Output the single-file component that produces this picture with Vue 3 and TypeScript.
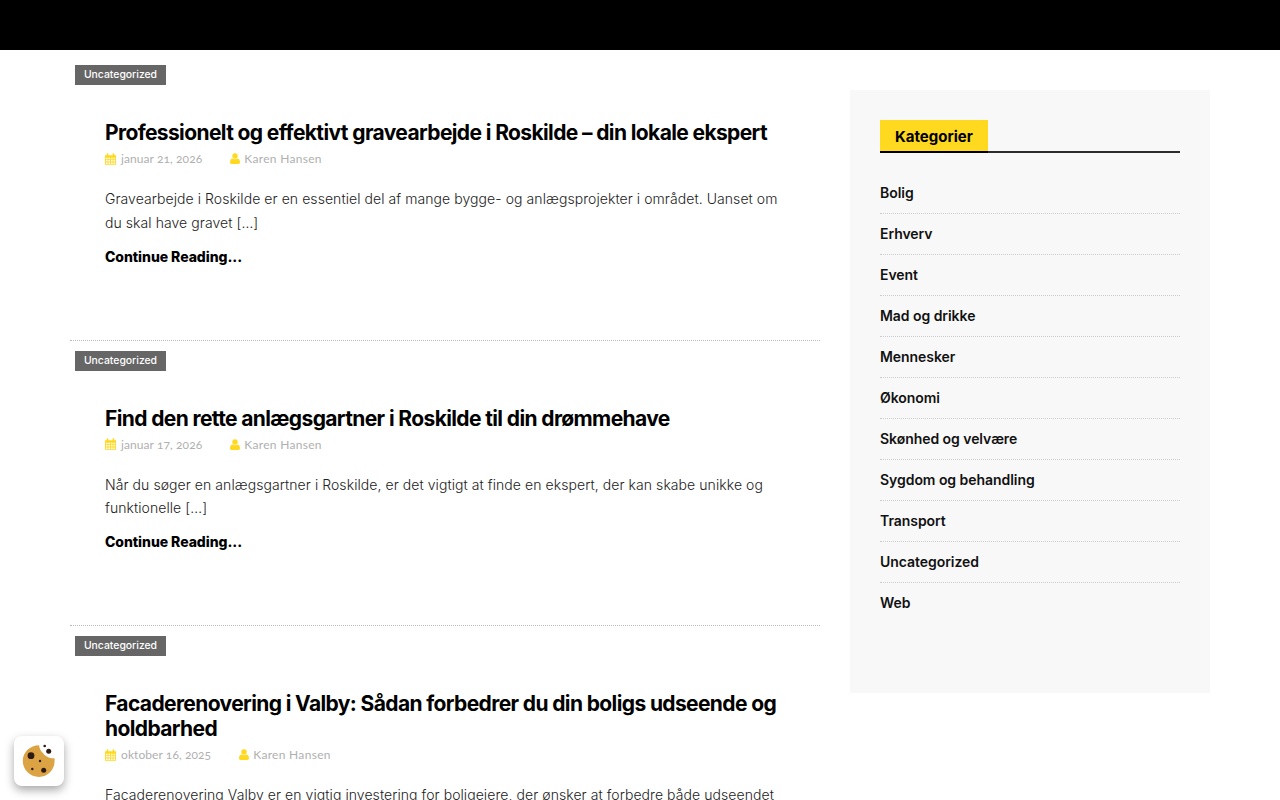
<script setup lang="ts">
interface Post {
  title: string[];
  date: string;
  text: string[];
  link: boolean;
}

const posts: Post[] = [
  {
    title: ['Professionelt og effektivt gravearbejde i Roskilde – din lokale ekspert'],
    date: 'januar 21, 2026',
    text: ['Gravearbejde i Roskilde er en essentiel del af mange bygge- og anlægsprojekter i området. Uanset om', 'du skal have gravet […]'],
    link: true,
  },
  {
    title: ['Find den rette anlægsgartner i Roskilde til din drømmehave'],
    date: 'januar 17, 2026',
    text: ['Når du søger en anlægsgartner i Roskilde, er det vigtigt at finde en ekspert, der kan skabe unikke og', 'funktionelle […]'],
    link: true,
  },
  {
    title: ['Facaderenovering i Valby: Sådan forbedrer du din boligs udseende og', 'holdbarhed'],
    date: 'oktober 16, 2025',
    text: ['Facaderenovering Valby er en vigtig investering for boligejere, der ønsker at forbedre både udseendet'],
    link: false,
  },
];

const categories: string[] = [
  'Bolig', 'Erhverv', 'Event', 'Mad og drikke', 'Mennesker', 'Økonomi',
  'Skønhed og velvære', 'Sygdom og behandling', 'Transport', 'Uncategorized', 'Web',
];
</script>

<template>
  <div class="page">
    <header class="topbar"></header>
    <div class="container">
      <main class="posts">
        <article v-for="post in posts" :key="post.date" class="post">
          <span class="badge">Uncategorized</span>
          <div class="body">
            <h2 class="title">
              <span v-for="line in post.title" :key="line" class="line">{{ line }}</span>
            </h2>
            <div class="meta">
              <span class="meta-item date">
                <svg class="icon" viewBox="0 0 13 14" width="11" height="12">
                  <path fill="#ffd91f" d="M0 2.5h2V1.2C2 .6 2.400.2 3 .2s1 .4 1 1v1.300h5V1.200c0-.6.4-1 1-1s1 .4 1 1v1.300h2v11.300H0zM1 5.500v1.800h2V5.500zm3 0v1.800h2V5.500zm3 0v1.800h2V5.500zm3 0v1.800h2V5.500zM1 8.300v1.800h2V8.300zm3 0v1.800h2V8.300zm3 0v1.800h2V8.300zm3 0v1.800h2V8.300zM1 11v1.800h2V11zm3 0v1.800h2V11zm3 0v1.800h2V11zm3 0v1.800h2V11z" />
                </svg>
                {{ post.date }}
              </span>
              <span class="meta-item author">
                <svg class="icon" viewBox="0 0 10 11" width="10" height="11">
                  <circle cx="5" cy="3" r="2.700" fill="#ffd91f" />
                  <path fill="#ffd91f" d="M0 9.200C0 7 1 5.600 2.400 5.400c.7.500 1.600.8 2.600.8s1.900-.3 2.600-.8C9 5.600 10 7 10 9.200c0 1-.7 1.700-1.600 1.700H1.600C.7 10.900 0 10.200 0 9.200z" />
                </svg>
                Karen Hansen
              </span>
            </div>
            <p class="text">
              <span v-for="line in post.text" :key="line" class="line">{{ line }}</span>
            </p>
            <a v-if="post.link" class="more" href="#">Continue Reading...</a>
          </div>
        </article>
      </main>

      <aside class="sidebar">
        <div class="heading"><span>Kategorier</span></div>
        <ul class="cats">
          <li v-for="cat in categories" :key="cat"><a href="#">{{ cat }}</a></li>
        </ul>
      </aside>
    </div>

    <button class="cookie" type="button" aria-label="Cookie settings">
      <svg viewBox="0 0 36 36" width="36" height="36">
        <path fill="#dba344" d="M18 2.200C18.500 5.500 20 9 22.500 10.500 24 13 28 15.500 33.500 15.300c.1.900.1 1.800.1 2.700 0 8.800-7 15.900-15.600 15.900S1.800 26.800 1.800 18 9 2.200 18 2.200z" />
        <circle cx="10" cy="12.700" r="3.400" fill="#2e1a14" />
        <circle cx="19" cy="18" r="1.200" fill="#2e1a14" />
        <circle cx="11.300" cy="26" r="1.200" fill="#2e1a14" />
        <circle cx="22.700" cy="27.300" r="2.500" fill="#2e1a14" />
        <circle cx="27.700" cy="8.300" r="2.500" fill="#2e1a14" />
        <circle cx="23.700" cy="3" r="1.300" fill="#2e1a14" />
      </svg>
    </button>
  </div>
</template>

<style scoped>
.page {
  height: 800px;
  overflow: hidden;
  background: #fff;
  font-family: Inter, Lato, sans-serif;
  font-variant-ligatures: none;
  color: #222;
}
.topbar {
  height: 50px;
  background: #000;
}
.container {
  width: 1140px;
  margin: 0 auto;
  display: flex;
  align-items: flex-start;
  gap: 30px;
}
.posts {
  width: 750px;
  padding-top: 5px;
}
.post {
  height: 285.6px;
  box-sizing: border-box;
  padding-top: 10px;
  border-bottom: 1px dotted #bbb;
}
.post:last-child {
  height: auto;
  border-bottom: 0;
}
.badge {
  display: block;
  width: 91px;
  height: 20px;
  margin-left: 5px;
  background: #666;
  color: #fff;
  font-size: 10.4px;
  font-weight: 500;
  line-height: 20px;
  text-align: center;
}
.body {
  padding: 35px 30px 0 35px;
}
.title {
  margin: 0;
  color: #000;
  font-size: 21px;
  font-weight: 700;
  letter-spacing: -0.62px;
  line-height: 25px;
}
.line {
  display: block;
  white-space: nowrap;
}
.meta {
  display: flex;
  gap: 28px;
  margin-top: 5px;
  height: 17px;
  align-items: center;
  color: #b0b0b0;
  font-family: Lato, sans-serif;
  font-size: 12px;
  letter-spacing: 0.08px;
  font-variant-numeric: oldstyle-nums;
}
.meta-item {
  display: flex;
  align-items: center;
  gap: 4px;
}
.date {
  gap: 5px;
}
.author {
  letter-spacing: 0.3px;
}
.text {
  margin: 20px 0 0;
  color: #222;
  font-size: 14px;
  font-weight: 300;
  letter-spacing: 0.07px;
  line-height: 23.8px;
}
.more {
  display: block;
  margin-top: 12px;
  color: #000;
  font-size: 14px;
  font-weight: 800;
  letter-spacing: -0.05px;
  line-height: 20px;
  text-decoration: none;
}
.sidebar {
  width: 360px;
  box-sizing: border-box;
  margin-top: 40px;
  padding: 30px 30px 69px;
  background: #f8f8f8;
}
.heading {
  border-bottom: 2px solid #2b2b2b;
  height: 33px;
  box-sizing: border-box;
}
.heading span {
  display: block;
  width: 108px;
  height: 33px;
  box-sizing: border-box;
  padding-left: 15px;
  background: #ffd91f;
  border-bottom: 2px solid #000;
  color: #000;
  font-size: 15px;
  font-weight: 700;
  line-height: 33px;
}
.cats {
  list-style: none;
  margin: 20px 0 0;
  padding: 0;
}
.cats li {
  height: 41px;
  box-sizing: border-box;
  border-bottom: 1px dotted #ccc;
  font-size: 14px;
  font-weight: 600;
  letter-spacing: -0.05px;
  line-height: 40px;
}
.cats li:last-child {
  border-bottom: 0;
}
.cats a {
  color: #111;
  text-decoration: none;
}
.cookie {
  position: fixed;
  left: 14px;
  top: 736px;
  width: 50px;
  height: 50px;
  padding: 0;
  border: 0;
  border-radius: 8px;
  background: #fff;
  box-shadow: 0 4px 10px rgba(0, 0, 0, 0.35);
  display: flex;
  align-items: center;
  justify-content: center;
}
</style>
